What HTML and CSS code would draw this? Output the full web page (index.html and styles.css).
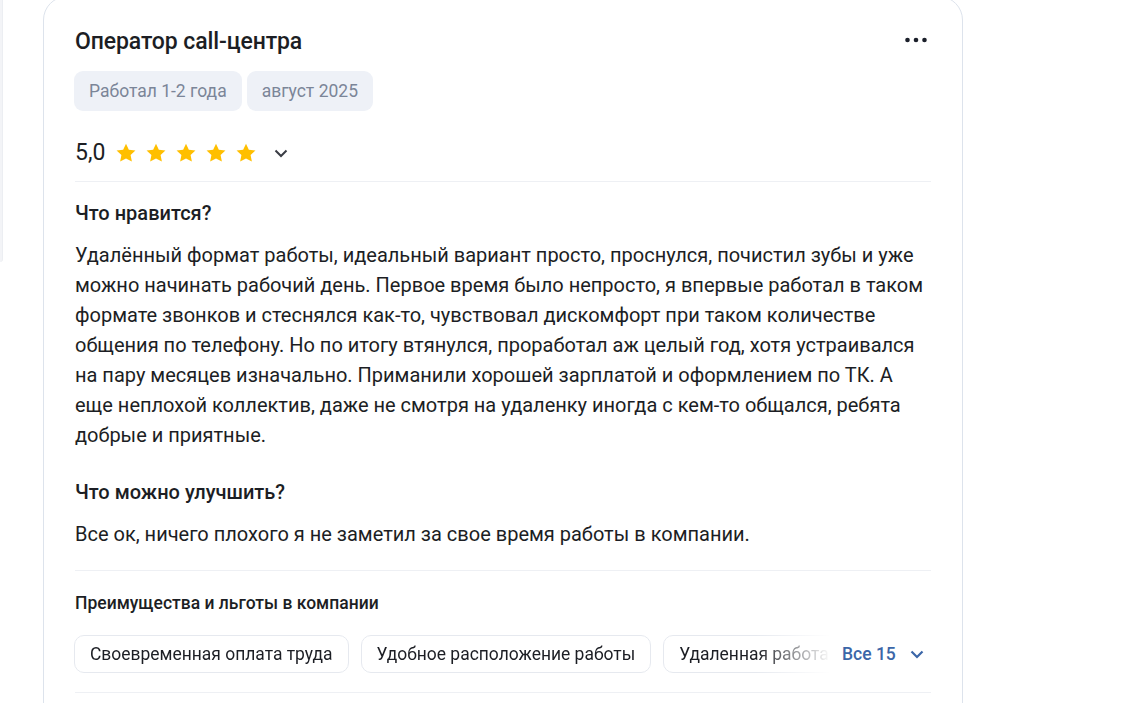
FILE: index.html
```html
<!DOCTYPE html>
<html lang="ru">
<head>
<meta charset="utf-8">
<link rel="stylesheet" href="styles.css">
</head>
<body>
<div class="page">
  <div class="side-stub"></div>
  <article class="card">
    <header class="card-head">
      <h2 class="title">Оператор call-центра</h2>
      <button class="more" aria-label="Ещё">
        <svg width="24" height="8" viewBox="0 0 24 8"><circle cx="3.5" cy="4" r="2.3" fill="#1b1f2a"/><circle cx="12" cy="4" r="2.3" fill="#1b1f2a"/><circle cx="20.5" cy="4" r="2.3" fill="#1b1f2a"/></svg>
      </button>
    </header>
    <div class="tags">
      <span class="tag">Работал 1-2 года</span>
      <span class="tag">август 2025</span>
    </div>
    <div class="rating">
      <span class="score">5,0</span>
      <span class="stars">
        <svg class="star" viewBox="0 0 24 24"><path d="M12 1.8l3.1 6.6 7.2.9-5.3 5 1.4 7.1L12 17.9l-6.4 3.5 1.4-7.1-5.3-5 7.2-.9z"/></svg>
        <svg class="star" viewBox="0 0 24 24"><path d="M12 1.8l3.1 6.6 7.2.9-5.3 5 1.4 7.1L12 17.9l-6.4 3.5 1.4-7.1-5.3-5 7.2-.9z"/></svg>
        <svg class="star" viewBox="0 0 24 24"><path d="M12 1.8l3.1 6.6 7.2.9-5.3 5 1.4 7.1L12 17.9l-6.4 3.5 1.4-7.1-5.3-5 7.2-.9z"/></svg>
        <svg class="star" viewBox="0 0 24 24"><path d="M12 1.8l3.1 6.6 7.2.9-5.3 5 1.4 7.1L12 17.9l-6.4 3.5 1.4-7.1-5.3-5 7.2-.9z"/></svg>
        <svg class="star" viewBox="0 0 24 24"><path d="M12 1.8l3.1 6.6 7.2.9-5.3 5 1.4 7.1L12 17.9l-6.4 3.5 1.4-7.1-5.3-5 7.2-.9z"/></svg>
      </span>
      <svg class="chev" width="14" height="9" viewBox="0 0 14 9"><path d="M1.5 1.5L7 7l5.5-5.5" fill="none" stroke="#3a3d45" stroke-width="2"/></svg>
    </div>
    <hr class="sep">
    <h3 class="q">Что нравится?</h3>
    <p class="text">Удалённый формат работы, идеальный вариант просто, проснулся, почистил зубы и уже можно начинать рабочий день. Первое время было непросто, я впервые работал в таком формате звонков и стеснялся как-то, чувствовал дискомфорт при таком количестве общения по телефону. Но по итогу втянулся, проработал аж целый год, хотя устраивался на пару месяцев изначально. Приманили хорошей зарплатой и оформлением по ТК. А еще неплохой коллектив, даже не смотря на удаленку иногда с кем-то общался, ребята добрые и приятные.</p>
    <h3 class="q q2">Что можно улучшить?</h3>
    <p class="text">Все ок, ничего плохого я не заметил за свое время работы в компании.</p>
    <hr class="sep sep2">
    <h4 class="benefits-title">Преимущества и льготы в компании</h4>
    <div class="benefits">
      <div class="chips">
        <span class="chip">Своевременная оплата труда</span>
        <span class="chip">Удобное расположение работы</span>
        <span class="chip">Удаленная работа</span>
        <span class="chip">Белая зарплата</span>
      </div>
      <button class="all">Все 15
        <svg width="14" height="9" viewBox="0 0 14 9"><path d="M1.5 1.5L7 7l5.5-5.5" fill="none" stroke="#3b66a8" stroke-width="2.2"/></svg>
      </button>
    </div>
    <hr class="sep sep3">
  </article>
</div>
</body>
</html>
```

FILE: styles.css
```css
* { box-sizing: border-box; }
html, body { margin: 0; padding: 0; background: #fff; }
body {
  font-family: Roboto, "Noto Sans", "Liberation Sans", sans-serif;
  color: #1c1e24;
  overflow: hidden;
}
.page {
  display: flex;
  align-items: flex-start;
  height: 703px;
  overflow: hidden;
}
.side-stub {
  width: 3px;
  height: 262px;
  background: #f3f4f7;
  border-right: 1px solid #eceef2;
  border-bottom-right-radius: 3px;
  flex: none;
}
.card {
  margin-left: 40px;
  margin-top: -4px;
  width: 920px;
  flex: none;
  border: 1px solid #dde3ec;
  border-radius: 24px;
  padding: 31px 31px 0 30px;
  min-height: 760px;
}
.card-head {
  display: flex;
  align-items: center;
  justify-content: space-between;
  height: 28px;
  padding-left: 1px;
}
.title {
  margin: 0;
  font-size: 23px;
  font-weight: 500;
  line-height: 28px;
  letter-spacing: -0.1px;
}
.more {
  border: 0;
  background: none;
  padding: 0;
  margin-right: 3px;
  margin-top: -5px;
  display: flex;
}
.tags {
  display: flex;
  gap: 5px;
  margin-top: 15px;
}
.tag {
  height: 40px;
  display: inline-flex;
  align-items: center;
  padding: 0 15px;
  border-radius: 9px;
  background: #eef1f7;
  color: #7b8598;
  font-size: 17.5px;
}
.rating {
  display: flex;
  align-items: center;
  height: 28px;
  margin-top: 28px;
  padding-left: 1px;
}
.score {
  font-size: 23px;
  line-height: 28px;
  margin-right: 10px;
}
.stars {
  display: flex;
  gap: 8px;
}
.star {
  width: 22px;
  height: 22px;
  fill: #ffbf00;
  display: block;
}
.chev {
  margin-left: 17px;
  margin-top: 1px;
}
.sep {
  border: 0;
  border-top: 1px solid #eef0f4;
  margin: 14px 0 0 1px;
  height: 0;
}
.q {
  margin: 18px 0 0 1px;
  font-size: 20px;
  font-weight: 500;
  line-height: 26px;
}
.q2 { margin-top: 29px; }
.text {
  margin: 14px 0 0 1px;
  font-size: 20px;
  line-height: 30px;
}
.sep2 { margin-top: 21px; }
.benefits-title {
  margin: 20px 0 0 1px;
  font-size: 17.5px;
  font-weight: 500;
  line-height: 24px;
}
.benefits {
  display: flex;
  align-items: center;
  margin-top: 20px;
}
.chips {
  display: flex;
  gap: 12px;
  width: 757px;
  overflow: hidden;
  flex: none;
  -webkit-mask-image: linear-gradient(to right, #000 90%, transparent 100%);
  mask-image: linear-gradient(to right, #000 90%, transparent 100%);
}
.chip {
  flex: none;
  height: 38px;
  display: inline-flex;
  align-items: center;
  padding: 0 15px;
  border: 1px solid #e6e9ef;
  border-radius: 10px;
  background: #fff;
  font-size: 17.45px;
  color: #1c1e24;
}
.all {
  border: 0;
  background: none;
  padding: 0;
  margin-left: 11px;
  display: flex;
  align-items: center;
  gap: 14px;
  font-family: inherit;
  font-size: 17.5px;
  font-weight: 500;
  color: #3b66a8;
  white-space: nowrap;
}
.sep3 { margin-top: 19px; }
```
